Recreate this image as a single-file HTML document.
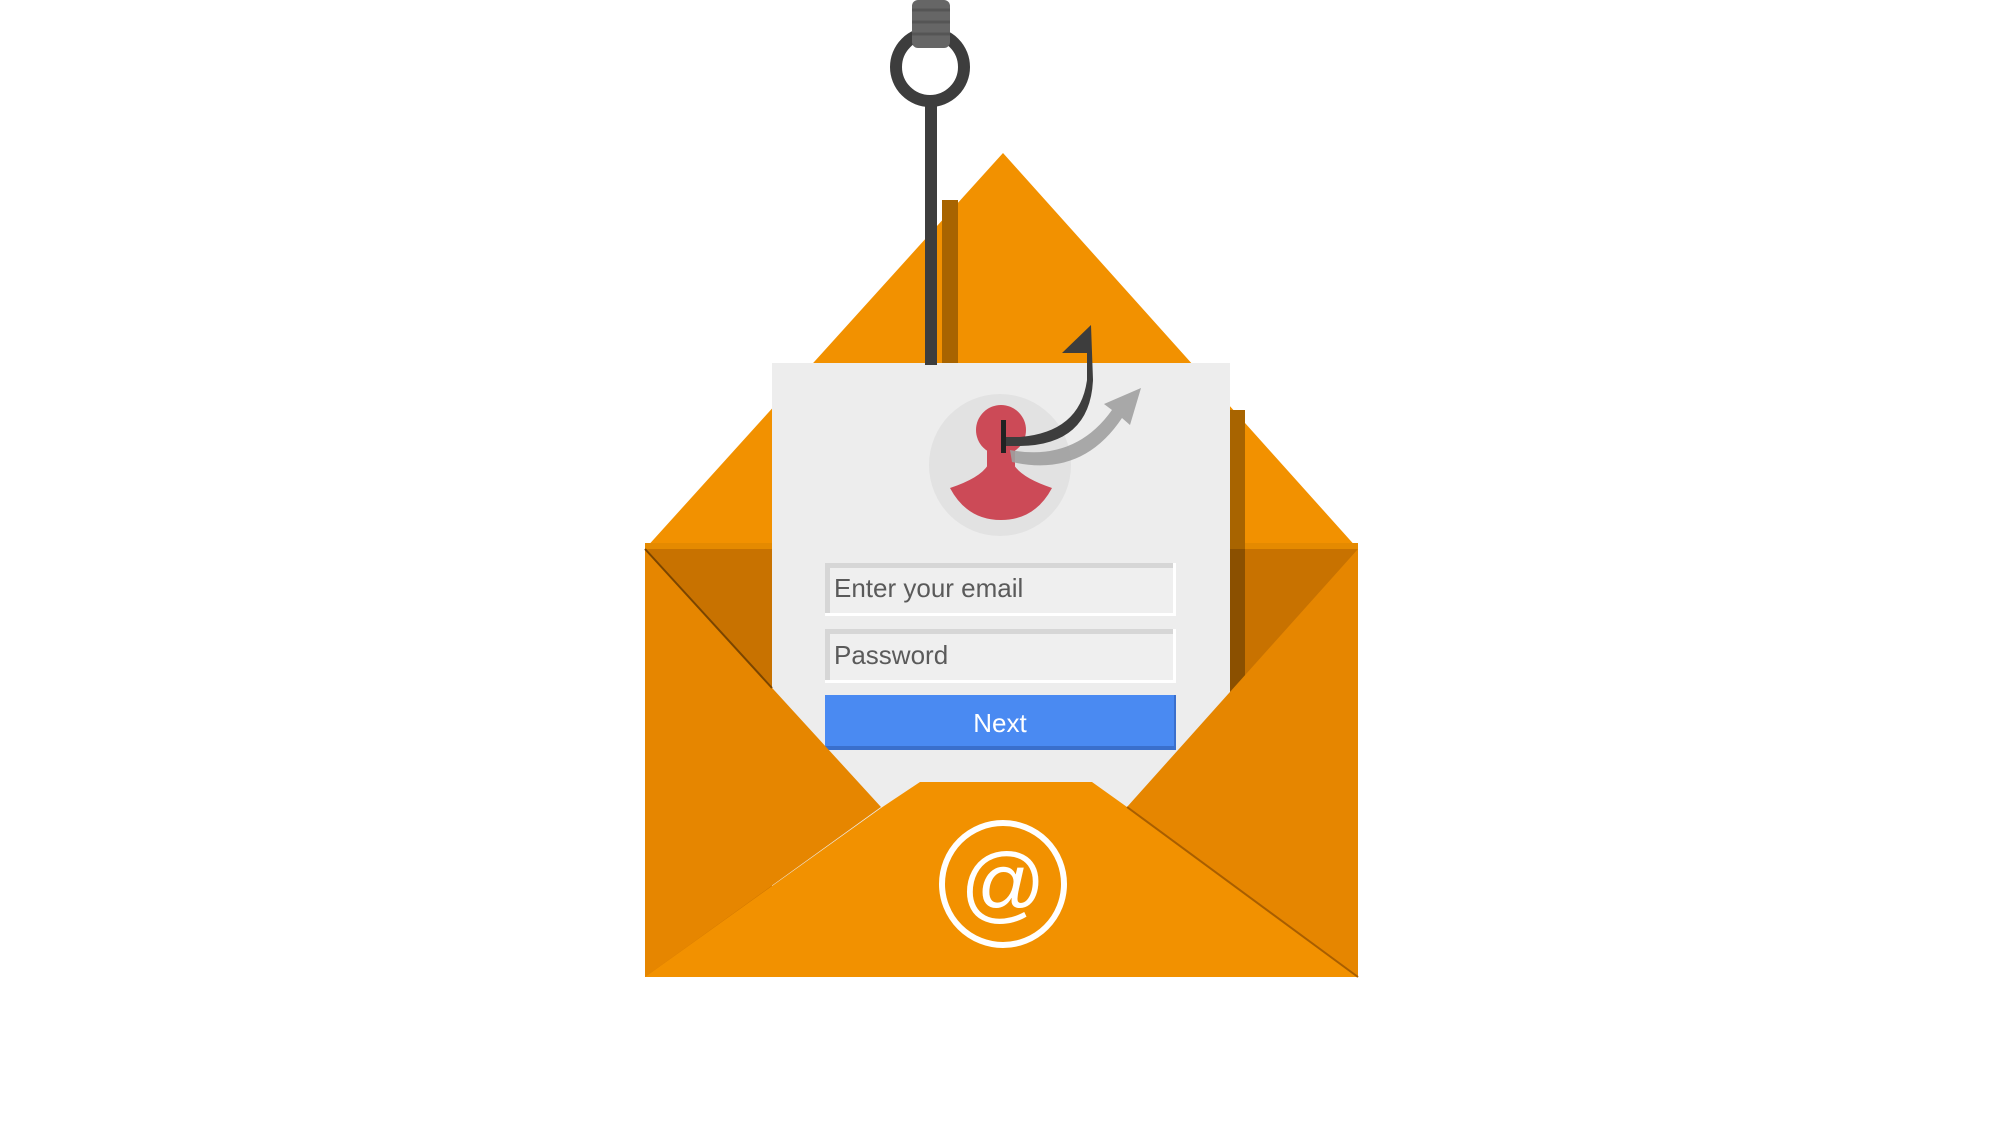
<!DOCTYPE html>
<html><head><meta charset="utf-8"><style>
html,body{margin:0;padding:0;background:#fff;width:2000px;height:1125px;overflow:hidden}
</style></head><body>
<svg width="2000" height="1125" viewBox="0 0 2000 1125" xmlns="http://www.w3.org/2000/svg">
<polygon points="645,549 1003,153 1358,549" fill="#f29100"/>
<rect x="645" y="543" width="713" height="6" fill="#e58a00"/>
<polygon points="645,549 1358,549 1358,977 645,977" fill="#c87200"/>
<rect x="942" y="200" width="16" height="165" fill="#a86400"/>
<rect x="1229" y="410" width="16" height="139" fill="#a86400"/>
<rect x="1229" y="549" width="16" height="160" fill="#8b5000"/>
<rect x="772" y="363" width="458" height="560" fill="#ededed"/>
<circle cx="1000" cy="465" r="71" fill="#e2e2e2"/>
<circle cx="1001" cy="430" r="25" fill="#cc4a57"/>
<rect x="987" y="440" width="28" height="40" fill="#cc4a57"/>
<path d="M950,488 Q980,478 988,465 L1014,465 Q1022,478 1052,488 Q1035,520 1001,520 Q967,520 950,488 Z" fill="#cc4a57"/>
<path d="M1010,450 Q1075,462 1112,410 L1104,404 L1141,388 L1130,425 L1122,418 Q1082,478 1012,462 Z" fill="#a0a0a0" opacity="0.9"/>
<path d="M1003,437 L1020,437 Q1080,432 1087,380 L1087,353 L1062,353 L1091,325 L1093,380 Q1090,445 1020,446 L1003,446 Z" fill="#3d3d3d"/>
<rect x="1001" y="420" width="5" height="33" fill="#222"/>
<rect x="925" y="100" width="12" height="265" fill="#3d3d3d"/>
<circle cx="930" cy="67" r="34" fill="none" stroke="#3d3d3d" stroke-width="12"/>
<rect x="912" y="0" width="38" height="48" rx="6" fill="#666"/>
<g stroke="#555" stroke-width="3"><line x1="912" y1="10" x2="950" y2="10"/><line x1="912" y1="22" x2="950" y2="22"/><line x1="912" y1="34" x2="950" y2="34"/></g>
<rect x="825" y="563" width="351" height="53" fill="#fff"/>
<rect x="825" y="563" width="348" height="50" fill="#d6d6d6"/>
<rect x="830" y="568" width="343" height="45" fill="#efefef"/>
<text x="834" y="597" font-family="Liberation Sans, sans-serif" font-size="26" fill="#5a5a5a">Enter your email</text>
<rect x="825" y="629" width="351" height="54" fill="#fff"/>
<rect x="825" y="629" width="348" height="51" fill="#d6d6d6"/>
<rect x="830" y="634" width="343" height="46" fill="#efefef"/>
<text x="834" y="664" font-family="Liberation Sans, sans-serif" font-size="26" fill="#5a5a5a">Password</text>
<rect x="825" y="695" width="351" height="55" fill="#3a6fcc"/>
<rect x="825" y="695" width="349" height="51" fill="#4a8af2"/>
<text x="1000" y="732" text-anchor="middle" font-family="Liberation Sans, sans-serif" font-size="26" fill="#fff">Next</text>
<polygon points="645,549 881,807 645,977" fill="#e68600"/>
<line x1="645" y1="549" x2="772" y2="688" stroke="#7a4500" stroke-width="2"/>
<polygon points="1358,549 1127,807 1358,977" fill="#e68600"/>
<polygon points="645,977 881,808 920,782 1092,782 1127,807 1358,977" fill="#f29100"/>
<line x1="1127" y1="807" x2="1358" y2="977" stroke="#a85e00" stroke-width="2"/>
<circle cx="1003" cy="884" r="61" fill="none" stroke="#fff" stroke-width="6"/>
<text x="1003" y="912" text-anchor="middle" font-family="Liberation Sans, sans-serif" font-size="84" fill="#fff">@</text>
</svg>
</body></html>
